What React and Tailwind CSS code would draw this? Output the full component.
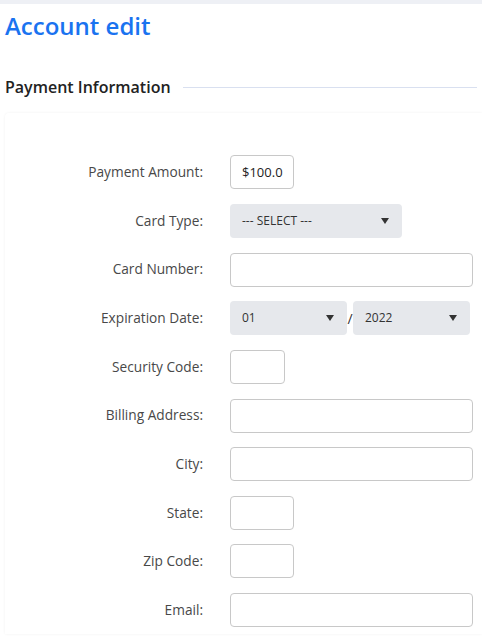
const font = { fontFamily: '"Open Sans", "Noto Sans", sans-serif' };

function Caret() {
  return (
    <svg width="8" height="6" viewBox="0 0 8 6" className="shrink-0">
      <path d="M0 0 L8 0 L4 6 Z" fill="#333" />
    </svg>
  );
}

function Select({ value, w }) {
  return (
    <div className={`flex h-[34px] ${w} items-center justify-between rounded-[4px] bg-[#e6e8ec] pl-3 pr-[13px] text-[12px] text-[#333]`}>
      <span>{value}</span>
      <Caret />
    </div>
  );
}

function Input({ w, value }) {
  return (
    <div className={`flex h-[34px] ${w} items-center rounded-[4px] border border-[#c8c8c8] bg-white px-[11px] text-[13px] text-[#222]`}>
      {value}
    </div>
  );
}

function Row({ label, children }) {
  return (
    <div className="flex h-[48.65px] items-center">
      <label className="w-[198px] text-right text-[13.7px] text-[#484848]">{label}</label>
      <div className="ml-[27px] flex items-center">{children}</div>
    </div>
  );
}

export default function App() {
  return (
    <div className="min-h-screen bg-white" style={font}>
      <div className="h-[4px] bg-[#eef0f5]" />
      <h1 className="mt-[6px] px-[5px] text-[24px] font-semibold leading-[32px] text-[#1a73f0]">Account edit</h1>
      <div className="mt-[33px] flex items-center px-[5px]">
        <h2 className="text-[16px] font-semibold text-[#222]">Payment Information</h2>
        <div className="ml-[12px] h-px flex-1 bg-[#d9e0f0]" />
      </div>
      <div className="ml-[5px] mt-[14px] rounded-tl-[4px] bg-white pt-[35px] shadow-[0_0_3px_rgba(0,0,0,0.06)]">
        <Row label="Payment Amount:"><Input w="w-[64px]" value="$100.0" /></Row>
        <Row label="Card Type:"><Select value="--- SELECT ---" w="w-[172px]" /></Row>
        <Row label="Card Number:"><Input w="w-[243px]" /></Row>
        <Row label="Expiration Date:">
          <Select value="01" w="w-[117px]" />
          <span className="w-[6px] text-center text-[14px] text-[#333]">/</span>
          <Select value="2022" w="w-[117px]" />
        </Row>
        <Row label="Security Code:"><Input w="w-[55px]" /></Row>
        <Row label="Billing Address:"><Input w="w-[243px]" /></Row>
        <Row label="City:"><Input w="w-[243px]" /></Row>
        <Row label="State:"><Input w="w-[64px]" /></Row>
        <Row label="Zip Code:"><Input w="w-[64px]" /></Row>
        <Row label="Email:"><Input w="w-[243px]" /></Row>
      </div>
    </div>
  );
}
